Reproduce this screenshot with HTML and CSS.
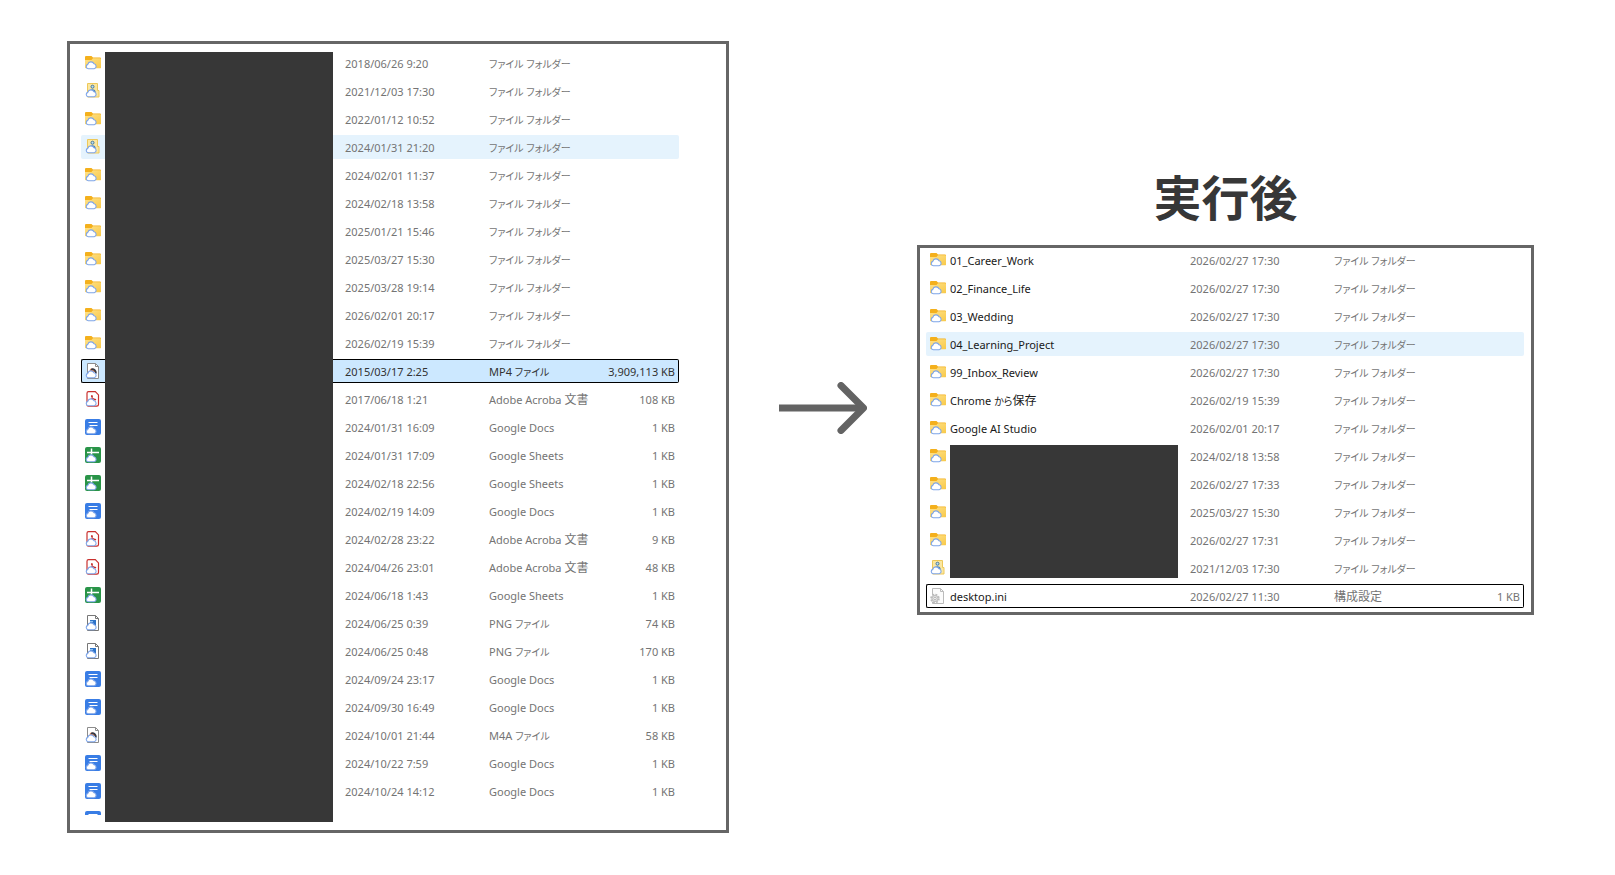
FILE: index.html
```html
<!DOCTYPE html>
<html lang="ja">
<head>
<meta charset="utf-8">
<meta name="viewport" content="width=device-width, initial-scale=1">
<title>実行後</title>
<link rel="stylesheet" href="styles.css">
</head>
<body>
<svg class="sprite" aria-hidden="true">
  <defs>
    <linearGradient id="folder-fill" x1="0" y1="0" x2="1" y2="1"><stop offset="0" stop-color="#ffe28a"/><stop offset="1" stop-color="#f8c94a"/></linearGradient>
    <path id="cloud" d="M3.300 13.700a2.200 2.200 0 0 1-.5-4.300A3.300 3.300 0 0 1 9 8.800a2.500 2.500 0 0 1 .2 4.900z" fill="#fff" stroke="#7da5ea" stroke-width="1.100"/>
  </defs>
  <symbol id="folder" viewBox="0 0 16 16"><path d="M0 2a1 1 0 0 1 1-1h5.5L8 2.5h7a1 1 0 0 1 1 1V13H0z" fill="#f4b01c"/><path d="M0 5h6.5L8 3.2h7a1 1 0 0 1 1 1V12a1 1 0 0 1-1 1.200H1a1 1 0 0 1-1-1z" fill="url(#folder-fill)"/><use href="#cloud"/></symbol>
  <symbol id="person" viewBox="0 0 16 16"><path d="M2.500.5h10v7h1.500v6.500h-11.500z" fill="#fbe7a0" stroke="#edc85a"/><circle cx="7.500" cy="3.700" r="1.500" fill="#bfe0f0" stroke="#44779c"/><path d="M4.500 8.500c.5-3 5.500-3 6 0v2h-6z" fill="#4681b5"/><use href="#cloud"/></symbol>
  <symbol id="docs" viewBox="0 0 16 16"><rect width="16" height="16" rx="2" fill="#397de5"/><path d="M3.500 3.500h9M4.500 6.500h8" stroke="#fff" stroke-width="1.200"/><use href="#cloud" y="1"/></symbol>
  <symbol id="sheets" viewBox="0 0 16 16"><rect width="16" height="16" rx="2" fill="#299448"/><path d="M2 5.500h12M6.500 1.500v6" stroke="#fff" stroke-width="1.500"/><use href="#cloud" y="1"/></symbol>
  <symbol id="pdf" viewBox="0 0 16 16"><path d="M3.500.7h6.800l3.200 3.200v9.600a1.700 1.700 0 0 1-1.700 1.700H3.500a1.500 1.500 0 0 1-1.500-1.500V2.200A1.500 1.500 0 0 1 3.500.7z" fill="#fff" stroke="#c9302e" stroke-width="1.200"/><path d="M4.500 10c2-1.500 3.500-4 2.700-5.200C6 4 6 6.500 9.500 8.800c2 .5 1.500-1.300-2-.6" fill="none" stroke="#c9302e" stroke-width="1.100"/><use href="#cloud" y="1"/></symbol>
  <symbol id="media" viewBox="0 0 16 16"><path d="M2.500.5h8l3 3v12h-11z" fill="#fff" stroke="#8c8c8c"/><path d="M10.500.5v3h3" fill="none" stroke="#8c8c8c"/><path d="M4.500 7.500C5 4.500 10 4.500 11 9H8z" fill="#e2783b"/><path d="M6 6.500c3-1 5 1 5 4" fill="none" stroke="#343a48" stroke-width="1.700"/><use href="#cloud" y="1"/></symbol>
  <symbol id="png" viewBox="0 0 16 16"><path d="M2.500.5h8l3 3v12h-11z" fill="#fff" stroke="#777"/><path d="M10.500.5v3h3" fill="none" stroke="#777"/><path d="M5 5h6v6H5z" fill="#2e73c8"/><path d="M5 6h3v1H5z" fill="#8fc3f2"/><use href="#cloud" y="1"/></symbol>
  <symbol id="ini" viewBox="0 0 16 16"><path d="M2.500.5h8l3 3v12h-11z" fill="#fbfbfb" stroke="#bbb"/><path d="M10.500.5v3h3" fill="none" stroke="#bbb"/><circle cx="5" cy="10.500" r="3.900" fill="#eee" stroke="#bbb" stroke-width="1.800" stroke-dasharray="1.800 1.260"/><circle cx="5" cy="10.500" r="3" fill="#e4e4e4" stroke="#bbb"/><circle cx="5" cy="10.500" r="1.200" fill="#fff" stroke="#b5b5b5"/></symbol>
</svg>

<main class="comparison">
  <section class="panel panel-before" aria-label="実行前">
    <div class="listing">
      <table class="files">
        <colgroup><col class="col-icon"><col class="col-name"><col class="col-date"><col class="col-type"><col></colgroup>
        <tbody>
          <tr><td><svg class="icon"><use href="#folder"/></svg></td><td></td><td>2018/06/26 9:20</td><td class="kana">ファイル フォルダー</td><td></td></tr>
          <tr><td><svg class="icon"><use href="#person"/></svg></td><td></td><td>2021/12/03 17:30</td><td class="kana">ファイル フォルダー</td><td></td></tr>
          <tr><td><svg class="icon"><use href="#folder"/></svg></td><td></td><td>2022/01/12 10:52</td><td class="kana">ファイル フォルダー</td><td></td></tr>
          <tr class="hovered"><td><svg class="icon"><use href="#person"/></svg></td><td></td><td>2024/01/31 21:20</td><td class="kana">ファイル フォルダー</td><td></td></tr>
          <tr><td><svg class="icon"><use href="#folder"/></svg></td><td></td><td>2024/02/01 11:37</td><td class="kana">ファイル フォルダー</td><td></td></tr>
          <tr><td><svg class="icon"><use href="#folder"/></svg></td><td></td><td>2024/02/18 13:58</td><td class="kana">ファイル フォルダー</td><td></td></tr>
          <tr><td><svg class="icon"><use href="#folder"/></svg></td><td></td><td>2025/01/21 15:46</td><td class="kana">ファイル フォルダー</td><td></td></tr>
          <tr><td><svg class="icon"><use href="#folder"/></svg></td><td></td><td>2025/03/27 15:30</td><td class="kana">ファイル フォルダー</td><td></td></tr>
          <tr><td><svg class="icon"><use href="#folder"/></svg></td><td></td><td>2025/03/28 19:14</td><td class="kana">ファイル フォルダー</td><td></td></tr>
          <tr><td><svg class="icon"><use href="#folder"/></svg></td><td></td><td>2026/02/01 20:17</td><td class="kana">ファイル フォルダー</td><td></td></tr>
          <tr><td><svg class="icon"><use href="#folder"/></svg></td><td></td><td>2026/02/19 15:39</td><td class="kana">ファイル フォルダー</td><td></td></tr>
          <tr class="selected focused"><td><svg class="icon"><use href="#media"/></svg></td><td></td><td>2015/03/17 2:25</td><td>MP4 <span class="kana">ファイル</span></td><td>3,909,113 KB</td></tr>
          <tr><td><svg class="icon"><use href="#pdf"/></svg></td><td></td><td>2017/06/18 1:21</td><td>Adobe Acroba <span class="kanji">文書</span></td><td>108 KB</td></tr>
          <tr><td><svg class="icon"><use href="#docs"/></svg></td><td></td><td>2024/01/31 16:09</td><td>Google Docs</td><td>1 KB</td></tr>
          <tr><td><svg class="icon"><use href="#sheets"/></svg></td><td></td><td>2024/01/31 17:09</td><td>Google Sheets</td><td>1 KB</td></tr>
          <tr><td><svg class="icon"><use href="#sheets"/></svg></td><td></td><td>2024/02/18 22:56</td><td>Google Sheets</td><td>1 KB</td></tr>
          <tr><td><svg class="icon"><use href="#docs"/></svg></td><td></td><td>2024/02/19 14:09</td><td>Google Docs</td><td>1 KB</td></tr>
          <tr><td><svg class="icon"><use href="#pdf"/></svg></td><td></td><td>2024/02/28 23:22</td><td>Adobe Acroba <span class="kanji">文書</span></td><td>9 KB</td></tr>
          <tr><td><svg class="icon"><use href="#pdf"/></svg></td><td></td><td>2024/04/26 23:01</td><td>Adobe Acroba <span class="kanji">文書</span></td><td>48 KB</td></tr>
          <tr><td><svg class="icon"><use href="#sheets"/></svg></td><td></td><td>2024/06/18 1:43</td><td>Google Sheets</td><td>1 KB</td></tr>
          <tr><td><svg class="icon"><use href="#png"/></svg></td><td></td><td>2024/06/25 0:39</td><td>PNG <span class="kana">ファイル</span></td><td>74 KB</td></tr>
          <tr><td><svg class="icon"><use href="#png"/></svg></td><td></td><td>2024/06/25 0:48</td><td>PNG <span class="kana">ファイル</span></td><td>170 KB</td></tr>
          <tr><td><svg class="icon"><use href="#docs"/></svg></td><td></td><td>2024/09/24 23:17</td><td>Google Docs</td><td>1 KB</td></tr>
          <tr><td><svg class="icon"><use href="#docs"/></svg></td><td></td><td>2024/09/30 16:49</td><td>Google Docs</td><td>1 KB</td></tr>
          <tr><td><svg class="icon"><use href="#media"/></svg></td><td></td><td>2024/10/01 21:44</td><td>M4A <span class="kana">ファイル</span></td><td>58 KB</td></tr>
          <tr><td><svg class="icon"><use href="#docs"/></svg></td><td></td><td>2024/10/22 7:59</td><td>Google Docs</td><td>1 KB</td></tr>
          <tr><td><svg class="icon"><use href="#docs"/></svg></td><td></td><td>2024/10/24 14:12</td><td>Google Docs</td><td>1 KB</td></tr>
          <tr class="cut-off" aria-hidden="true"><td><div class="icon-clip"><svg class="icon"><use href="#docs"/></svg></div></td><td></td><td></td><td></td><td></td></tr>
        </tbody>
      </table>
      <div class="mask mask-all"></div>
    </div>
  </section>

  <svg class="arrow" viewBox="0 0 88 52" role="img" aria-label="変更後へ"><path d="M0 26h83" stroke-width="7"/><path d="M62 3.500 84.500 26 62 48.500" stroke-width="7" stroke-linecap="round" stroke-linejoin="round"/></svg>

  <section class="after">
    <h1 class="title">実行後</h1>
    <div class="panel panel-after">
      <div class="listing">
        <table class="files">
          <colgroup><col class="col-icon"><col class="col-name"><col class="col-date"><col class="col-type"><col></colgroup>
          <tbody>
            <tr><td><svg class="icon"><use href="#folder"/></svg></td><td>01_Career_Work</td><td>2026/02/27 17:30</td><td class="kana">ファイル フォルダー</td><td></td></tr>
            <tr><td><svg class="icon"><use href="#folder"/></svg></td><td>02_Finance_Life</td><td>2026/02/27 17:30</td><td class="kana">ファイル フォルダー</td><td></td></tr>
            <tr><td><svg class="icon"><use href="#folder"/></svg></td><td>03_Wedding</td><td>2026/02/27 17:30</td><td class="kana">ファイル フォルダー</td><td></td></tr>
            <tr class="hovered"><td><svg class="icon"><use href="#folder"/></svg></td><td>04_Learning_Project</td><td>2026/02/27 17:30</td><td class="kana">ファイル フォルダー</td><td></td></tr>
            <tr><td><svg class="icon"><use href="#folder"/></svg></td><td>99_Inbox_Review</td><td>2026/02/27 17:30</td><td class="kana">ファイル フォルダー</td><td></td></tr>
            <tr><td><svg class="icon"><use href="#folder"/></svg></td><td>Chrome <span class="kana">から</span><span class="kanji">保存</span></td><td>2026/02/19 15:39</td><td class="kana">ファイル フォルダー</td><td></td></tr>
            <tr><td><svg class="icon"><use href="#folder"/></svg></td><td>Google AI Studio</td><td>2026/02/01 20:17</td><td class="kana">ファイル フォルダー</td><td></td></tr>
            <tr><td><svg class="icon"><use href="#folder"/></svg></td><td></td><td>2024/02/18 13:58</td><td class="kana">ファイル フォルダー</td><td></td></tr>
            <tr><td><svg class="icon"><use href="#folder"/></svg></td><td></td><td>2026/02/27 17:33</td><td class="kana">ファイル フォルダー</td><td></td></tr>
            <tr><td><svg class="icon"><use href="#folder"/></svg></td><td></td><td>2025/03/27 15:30</td><td class="kana">ファイル フォルダー</td><td></td></tr>
            <tr><td><svg class="icon"><use href="#folder"/></svg></td><td></td><td>2026/02/27 17:31</td><td class="kana">ファイル フォルダー</td><td></td></tr>
            <tr><td><svg class="icon"><use href="#person"/></svg></td><td></td><td>2021/12/03 17:30</td><td class="kana">ファイル フォルダー</td><td></td></tr>
            <tr class="focused"><td><svg class="icon"><use href="#ini"/></svg></td><td>desktop.ini</td><td>2026/02/27 11:30</td><td class="kanji">構成設定</td><td>1 KB</td></tr>
          </tbody>
        </table>
        <div class="mask mask-part"></div>
      </div>
    </div>
  </section>
</main>
</body>
</html>
```
FILE: styles.css
```css
* {
  box-sizing: border-box;
}

body {
  margin: 0;
  background: #fff;
  color: #747474;
  font-family: "Noto Sans", "Noto Sans CJK JP", sans-serif;
  font-size: 11px;
  line-height: 16px;
}

.sprite {
  position: absolute;
  width: 0;
  height: 0;
}

.comparison {
  display: flex;
  align-items: center;
  gap: 50px;
  min-height: 100vh;
  padding: 32px 81px 34px 67px;
}

.panel {
  border: 3px solid #666;
}

.panel-before {
  flex: 1 1 662px;
  padding: 3px 47px 11px 11px;
}

.after {
  flex: 1 1 617px;
  margin-bottom: 96px;
}

.panel-after {
  padding: 0 7px 0 6px;
}

.panel-after .listing {
  margin-top: -4px;
}

.arrow {
  flex: none;
  width: 88px;
  height: 52px;
  margin-bottom: 58px;
  fill: none;
  stroke: #636363;
}

.title {
  margin: 0 0 18px;
  color: #373737;
  font-family: "Noto Sans CJK JP", sans-serif;
  font-size: 48px;
  font-weight: 700;
  line-height: 64px;
  text-align: center;
}

.listing {
  position: relative;
}

.files {
  width: 100%;
  table-layout: fixed;
  border-collapse: separate;
  border-spacing: 0 4px;
}

.col-icon {
  width: 24px;
}

.col-name {
  width: 240px;
}

.col-date {
  width: 144px;
}

.col-type {
  width: 112px;
}

.files td {
  height: 24px;
  padding: 2px 0 0;
  border: 0 solid #000;
  white-space: nowrap;
  vertical-align: middle;
}

.files td:first-child {
  padding: 0 0 0 4px;
  border-radius: 2px 0 0 2px;
}

.files td:nth-child(2) {
  color: #191919;
}

.files td:last-child {
  padding-right: 4px;
  border-radius: 0 2px 2px 0;
  text-align: right;
}

.files .kana {
  font-size: 10px;
  font-feature-settings: "palt";
}

.files .kanji {
  font-size: 12px;
}

.hovered td {
  background: #e5f3fd;
}

.selected td {
  background: #cce8ff;
  color: #333;
}

.focused td {
  border-width: 1px 0;
}

.focused td:first-child {
  padding-left: 3px;
  border-left-width: 1px;
}

.focused td:last-child {
  padding-right: 3px;
  border-right-width: 1px;
}

.files .cut-off td {
  height: 8px;
  padding-top: 4px;
  line-height: 0;
}

.icon {
  display: block;
  width: 16px;
  height: 16px;
}

.icon-clip {
  height: 4px;
  overflow: hidden;
}

.mask {
  position: absolute;
  left: 24px;
  width: 228px;
  background: #373737;
}

.mask-all {
  top: 5px;
  bottom: -3px;
}

.mask-part {
  top: 201px;
  height: 133px;
}
```
